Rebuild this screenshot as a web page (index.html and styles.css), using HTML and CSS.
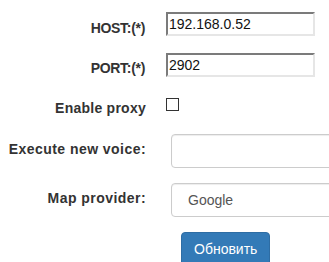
FILE: index.html
```html
<!DOCTYPE html>
<html>
<head>
<meta charset="utf-8">
<link rel="stylesheet" href="styles.css">
</head>
<body>
<form class="form">
  <div class="row row-text row-host">
    <label class="lbl lbl-host lbl-caps">HOST:(*)</label>
    <div class="ctl"><input class="plain" type="text" value="192.168.0.52"></div>
  </div>
  <div class="row row-text row-port">
    <label class="lbl lbl-port lbl-caps">PORT:(*)</label>
    <div class="ctl"><input class="plain" type="text" value="2902"></div>
  </div>
  <div class="row row-check">
    <label class="lbl lbl-wide lbl-proxy">Enable proxy</label>
    <div class="ctl"><input class="check" type="checkbox"></div>
  </div>
  <div class="row row-field">
    <label class="lbl lbl-field lbl-wide">Execute new voice:</label>
    <div class="ctl ctl-field"><input class="form-control" type="text"></div>
  </div>
  <div class="row row-field">
    <label class="lbl lbl-field lbl-wide">Map provider:</label>
    <div class="ctl ctl-field"><select class="form-control select"><option>Google</option></select></div>
  </div>
  <div class="actions">
    <button class="btn" type="button">Обновить</button>
  </div>
</form>
</body>
</html>
```
FILE: styles.css
```css
html, body {
  margin: 0;
  padding: 0;
  overflow: hidden;
  background: #fff;
}
body {
  font-family: "Liberation Sans", Arial, sans-serif;
  font-size: 14px;
  color: #333;
}
.form {
  padding-top: 12px;
}
.row {
  display: flex;
  align-items: flex-start;
}
.row-text { height: 24px; }
.row-host { margin-bottom: 17px; }
.row-port { margin-bottom: 21px; }
.row-check { height: 20px; margin-bottom: 16px; }
.row-field { height: 34px; margin-bottom: 15px; }
.lbl {
  flex: none;
  box-sizing: border-box;
  width: 146px;
  text-align: right;
  font-weight: bold;
  line-height: 20px;
  white-space: nowrap;
}
.lbl-caps {
  letter-spacing: -0.3px;
  padding-right: 1px;
}
.lbl-wide {
  letter-spacing: 0.45px;
}
.lbl-proxy {
  letter-spacing: 0.25px;
}
.lbl-host { padding-top: 6px; }
.lbl-port { padding-top: 5px; }
.lbl-field { padding-top: 5px; }
.ctl {
  margin-left: 20px;
  display: flex;
}
.ctl-field {
  margin-left: 25px;
}
.plain {
  box-sizing: border-box;
  width: 149px;
  height: 24px;
  margin: 0;
  padding: 0 1px;
  border-top: 2px solid #7b7b7b;
  border-left: 2px solid #7b7b7b;
  border-right: 2px solid #e6e6e6;
  border-bottom: 2px solid #e6e6e6;
  font-family: "Liberation Sans", Arial, sans-serif;
  font-size: 14px;
  color: #111;
  background: #fff;
  outline: none;
}
.check {
  appearance: none;
  -webkit-appearance: none;
  box-sizing: border-box;
  width: 13px;
  height: 13px;
  margin: 0;
  border: 1px solid #333;
  background: #fff;
}
.form-control {
  box-sizing: border-box;
  width: 220px;
  height: 34px;
  margin: 0;
  padding: 6px 12px;
  border: 1px solid #ccc;
  border-radius: 4px;
  box-shadow: inset 0 1px 1px rgba(0, 0, 0, 0.075);
  font-family: "Liberation Sans", Arial, sans-serif;
  font-size: 14px;
  color: #555;
  background: #fff;
  outline: none;
}
.select {
  appearance: none;
  -webkit-appearance: none;
  padding-left: 16px;
}
.actions {
  padding-left: 181px;
}
.btn {
  box-sizing: border-box;
  height: 34px;
  margin: 0;
  padding: 6px 12px;
  border: 1px solid #2e6da4;
  border-radius: 4px;
  background: #337ab7;
  color: #fff;
  font-family: "Liberation Sans", Arial, sans-serif;
  font-size: 14px;
  line-height: 20px;
}
```
